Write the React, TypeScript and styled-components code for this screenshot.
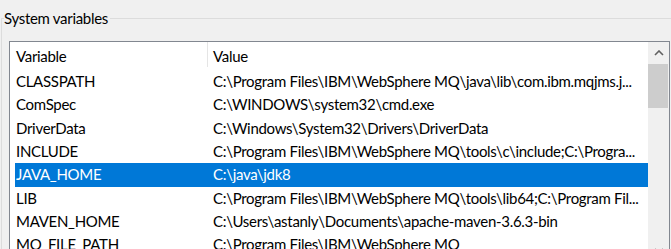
import React from "react";
import styled, { createGlobalStyle } from "styled-components";

const Global = createGlobalStyle`
  html, body { margin: 0; padding: 0; background: #f0f0f0; }
  body { font-family: Lato, "Noto Sans", sans-serif; overflow: hidden; }
`;

const Page = styled.div`
  width: 671px;
  height: 249px;
  overflow: hidden;
  background: #f0f0f0;
`;

const Group = styled.fieldset`
  margin: 8px 0 0 1px;
  padding: 0 0 0 2px;
  border: 1px solid #dcdcdc;
  border-right: none;
  border-bottom: none;
  min-width: 0;
`;

const Legend = styled.legend`
  padding: 0 2px 0 0;
  font-size: 15px;
  letter-spacing: -0.3px;
  line-height: 20px;
  color: #000;
`;

const ListBox = styled.div`
  margin: 13px 0 0 5px;
  width: 659px;
  height: 220px;
  border: 1px solid #828790;
  border-bottom: none;
  background: #fff;
  display: flex;
`;

const List = styled.div`
  flex: 1;
  min-width: 0;
  display: flex;
  flex-direction: column;
`;

const Header = styled.div`
  height: 28px;
  display: grid;
  grid-template-columns: 192px 1fr;
  padding-left: 5px;
`;

const HeaderCell = styled.div<{ $sep?: boolean }>`
  font-size: 15px;
  letter-spacing: -0.3px;
  line-height: 28px;
  color: #000;
  padding-left: ${(p) => (p.$sep ? "5px" : "1px")};
  border-left: ${(p) => (p.$sep ? "1px solid #e5e5e5" : "none")};
  height: 25px;
`;

const Row = styled.div<{ $selected?: boolean }>`
  height: 23.33px;
  display: grid;
  grid-template-columns: 192px 1fr;
  margin-left: 5px;
  background: ${(p) => (p.$selected ? "#0078d7" : "transparent")};
  color: ${(p) => (p.$selected ? "#ffffff" : "#000000")};
  flex-shrink: 0;
`;

const Cell = styled.div<{ $value?: boolean }>`
  font-size: 15px;
  letter-spacing: -0.3px;
  line-height: 23px;
  white-space: nowrap;
  overflow: hidden;
  padding-left: ${(p) => (p.$value ? "6px" : "1px")};
`;

const ScrollBar = styled.div`
  width: 21px;
  background: #f0f0f0;
  display: flex;
  flex-direction: column;
  flex-shrink: 0;
`;

const ArrowButton = styled.div`
  height: 22px;
  display: flex;
  align-items: center;
  justify-content: center;
  flex-shrink: 0;
`;

const Track = styled.div`
  flex: 1;
  display: flex;
  flex-direction: column;
`;

const Thumb = styled.div`
  margin: 0 1px 0 0;
  height: 44px;
  background: #cdcdcd;
`;

const Chevron = ({ up }: { up?: boolean }) => (
  <svg width="10" height="6" viewBox="0 0 10 6">
    <path
      d={up ? "M1 5 L5 1 L9 5" : "M1 1 L5 5 L9 1"}
      fill="none"
      stroke="#606060"
      strokeWidth="1.6"
    />
  </svg>
);

const rows: [string, string][] = [
  ["CLASSPATH", "C:\\Program Files\\IBM\\WebSphere MQ\\java\\lib\\com.ibm.mqjms.j..."],
  ["ComSpec", "C:\\WINDOWS\\system32\\cmd.exe"],
  ["DriverData", "C:\\Windows\\System32\\Drivers\\DriverData"],
  ["INCLUDE", "C:\\Program Files\\IBM\\WebSphere MQ\\tools\\c\\include;C:\\Progra..."],
  ["JAVA_HOME", "C:\\java\\jdk8"],
  ["LIB", "C:\\Program Files\\IBM\\WebSphere MQ\\tools\\lib64;C:\\Program Fil..."],
  ["MAVEN_HOME", "C:\\Users\\astanly\\Documents\\apache-maven-3.6.3-bin"],
  ["MQ_FILE_PATH", "C:\\Program Files\\IBM\\WebSphere MQ"],
];

export default function App() {
  return (
    <Page>
      <Global />
      <Group>
        <Legend>System variables</Legend>
        <ListBox>
          <List>
            <Header>
              <HeaderCell>Variable</HeaderCell>
              <HeaderCell $sep>Value</HeaderCell>
            </Header>
            {rows.map(([k, v]) => (
              <Row key={k} $selected={k === "JAVA_HOME"}>
                <Cell>{k}</Cell>
                <Cell $value>{v}</Cell>
              </Row>
            ))}
          </List>
          <ScrollBar>
            <ArrowButton>
              <Chevron up />
            </ArrowButton>
            <Track>
              <Thumb />
            </Track>
            <ArrowButton>
              <Chevron />
            </ArrowButton>
          </ScrollBar>
        </ListBox>
      </Group>
    </Page>
  );
}
